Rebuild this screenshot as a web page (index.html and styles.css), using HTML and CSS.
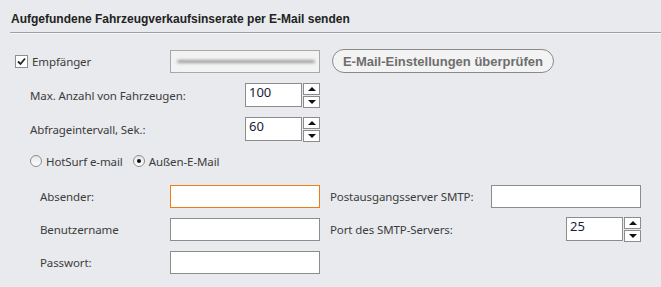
FILE: index.html
```html
<!DOCTYPE html>
<html lang="de">
<head>
    <meta charset="UTF-8">
    <title>E-Mail senden</title>
    <link rel="stylesheet" href="styles.css">
</head>
<body>
    <h2 class="title">Aufgefundene Fahrzeugverkaufsinserate per E-Mail senden</h2>

    <div class="row row-top">
        <label class="check">
            <span class="box">
                <svg width="11" height="11" viewBox="0 0 11 11"><path d="M2 5.5 L4.5 8 L9 2.5" fill="none" stroke="#222" stroke-width="1.8"/></svg>
            </span>
            Empfänger
        </label>
        <div class="field blurred"><span class="smear"></span></div>
        <button type="button" class="pill">E-Mail-Einstellungen überprüfen</button>
    </div>

    <div class="row row-num">
        <span class="label wide">Max. Anzahl von Fahrzeugen:</span>
        <div class="spin">
            <div class="num">100</div>
            <div class="arrows">
                <span class="arr up"></span>
                <span class="arr down"></span>
            </div>
        </div>
    </div>

    <div class="row row-num">
        <span class="label wide">Abfrageintervall, Sek.:</span>
        <div class="spin">
            <div class="num">60</div>
            <div class="arrows">
                <span class="arr up"></span>
                <span class="arr down"></span>
            </div>
        </div>
    </div>

    <div class="row row-radio">
        <label class="radio"><span class="dot"></span>HotSurf e-mail</label>
        <label class="radio on"><span class="dot"></span>Außen-E-Mail</label>
    </div>

    <div class="grid">
        <span class="label">Absender:</span>
        <div class="field focus"></div>
        <span class="label">Postausgangsserver SMTP:</span>
        <div class="field"></div>

        <span class="label">Benutzername</span>
        <div class="field"></div>
        <span class="label">Port des SMTP-Servers:</span>
        <div class="spin right">
            <div class="num">25</div>
            <div class="arrows">
                <span class="arr up"></span>
                <span class="arr down"></span>
            </div>
        </div>

        <span class="label">Passwort:</span>
        <div class="field"></div>
    </div>
</body>
</html>
```

FILE: styles.css
```css
body { margin: 0; background: #e8eaed; font-family: "Segoe UI", "Noto Sans", sans-serif; font-size: 11.5px; letter-spacing: -0.1px; color: #3c3c3c; }

.title { margin: 0 0 0 10px; padding: 12px 0 6px 1px; height: 14px; font: bold 12px/14px "Liberation Sans", Arial, sans-serif; letter-spacing: 0; color: #222; border-bottom: 1px solid #a0a0a0; box-shadow: 0 1px 0 #f6f6f6; }

.row { display: flex; align-items: center; }
.row-top { margin-top: 16px; height: 24px; padding-left: 15px; }
.row-num { height: 24px; padding-left: 30px; margin-top: 10px; }
.row-radio { margin-top: 9px; padding-left: 30px; gap: 10px; height: 22px; }

.check { display: flex; align-items: center; gap: 4px; width: 155px; }
.box { width: 11px; height: 11px; border: 1px solid #8e8e8e; background: #fff; display: flex; }

.field { width: 148px; height: 21px; border: 1px solid #8c8c8c; background: #fff; }
.blurred { background: #f3f3f3; border-color: #a8a8a8; position: relative; overflow: hidden; }
.smear { position: absolute; left: 6px; right: 4px; top: 9px; height: 3px; background: #9a9a9a; filter: blur(1.5px); border-radius: 2px; }
.focus { border-color: #f07c10; }

.pill { margin-left: 12px; height: 24px; width: 222px; border: 1px solid #8a8a8a; border-radius: 12px; background: #f3f3f3; font: bold 13px "Liberation Sans", Arial, sans-serif; color: #6e6e6e; padding: 0; }

.label.wide { width: 215px; }

.spin { display: flex; gap: 1px; }
.num { width: 52px; height: 22px; border: 1px solid #8c8c8c; background: #fff; padding-left: 3px; font-size: 13px; line-height: 17px; letter-spacing: 0; color: #1a1a3a; }
.arrows { display: flex; flex-direction: column; gap: 1px; }
.arr { width: 15px; height: 10px; border: 1px solid #8c8c8c; background: #fff; position: relative; }
.arr::after { content: ""; position: absolute; left: 4px; border-left: 4px solid transparent; border-right: 4px solid transparent; }
.up::after { top: 3px; border-bottom: 4px solid #111; }
.down::after { top: 3px; border-top: 4px solid #111; }

.radio { display: flex; align-items: center; gap: 4px; }
.dot { width: 10px; height: 10px; border: 1px solid #8c8c8c; border-radius: 50%; background: linear-gradient(#e6e6e6, #fff); position: relative; }
.on .dot::after { content: ""; position: absolute; left: 3px; top: 3px; width: 4px; height: 4px; border-radius: 50%; background: #111; }

.grid { display: grid; grid-template-columns: 130px 150px 10px 161px 150px; grid-auto-rows: 23px; row-gap: 10px; align-items: center; padding-left: 40px; margin-top: 13px; }
.grid .label:nth-child(4n+3) { grid-column: 4; }
.grid > :nth-child(4n+2) { grid-column: 2; }
.grid > :nth-child(4n) { grid-column: 5; }
.spin.right { justify-self: end; }
```
